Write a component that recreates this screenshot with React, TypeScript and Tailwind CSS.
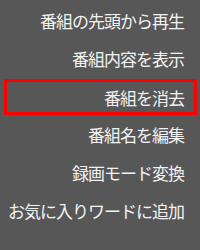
const items = [
  "番組の先頭から再生",
  "番組内容を表示",
  "番組を消去",
  "番組名を編集",
  "録画モード変換",
  "お気に入りワードに追加",
];

const selected = 2;

export default function App() {
  return (
    <div
      className="h-[250px] w-[200px] overflow-hidden bg-[#575757] pt-[1px] text-[17px] leading-none tracking-[-1px] text-[#f2f2f2]"
      style={{ fontFamily: '"Noto Sans CJK JP", "Noto Sans", sans-serif' }}
    >
      {items.map((label, i) =>
        i === selected ? (
          <div key={label} className="h-[38px] pl-[4px] pr-[3px] pt-[2px]">
            <div className="flex h-[36px] items-center justify-end border-[3px] border-[#ff0000] pr-[10px]">
              {label}
            </div>
          </div>
        ) : (
          <div key={label} className="flex h-[38px] items-center justify-end pr-[16px]">
            {label}
          </div>
        ),
      )}
    </div>
  );
}
